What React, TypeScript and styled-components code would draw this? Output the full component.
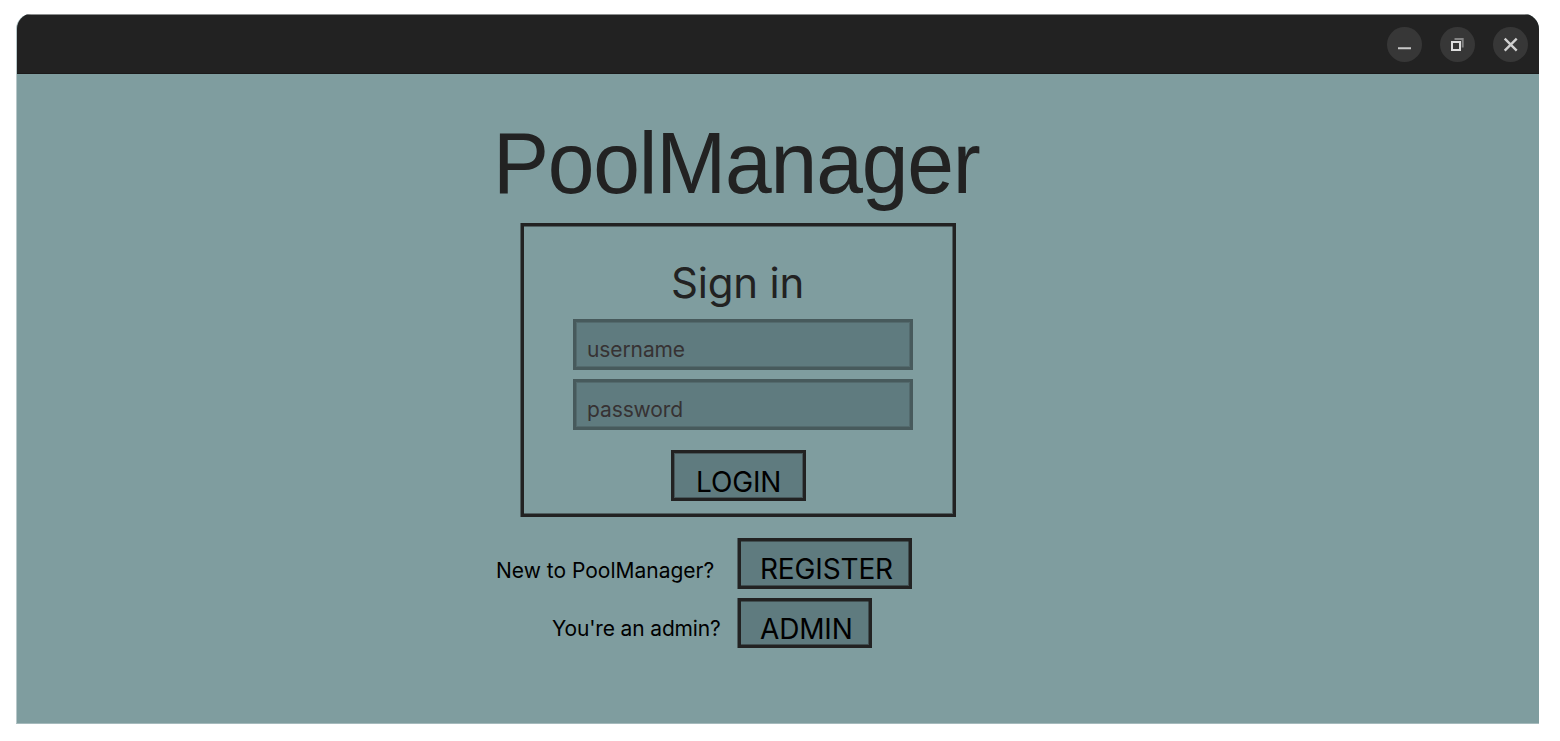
import React from "react";
import styled, { createGlobalStyle } from "styled-components";

const Global = createGlobalStyle`
  * { box-sizing: border-box; }
  body { margin: 0; background: #fff; font-family: Inter, "Liberation Sans", sans-serif; }
`;
const Page = styled.div`
  width: 1560px;
  height: 741px;
  padding: 14px 21px 18px 16px;
`;
const Window = styled.div`
  width: 1523px;
  height: 710px;
  display: flex;
  flex-direction: column;
  background: #7f9d9f;
  border-left: 1px solid #b8c8ca;
  border-bottom: 1px solid #a5babc;
  border-radius: 15px 15px 0 0;
  overflow: hidden;
`;
const TitleBar = styled.header`
  height: 60px;
  flex: none;
  background: #222;
  border-top: 1px solid #8c8e8e;
  border-bottom: 1px solid #1a1a1a;
  display: flex;
  justify-content: flex-end;
  align-items: center;
  gap: 18px;
  padding: 1px 11px 0 0;
`;
const WindowButton = styled.button`
  width: 35px;
  height: 35px;
  border: 0;
  border-radius: 50%;
  padding: 0;
  background: #373737;
  display: flex;
  svg { display: block; }
`;
const Content = styled.main`
  display: flex;
  flex-direction: column;
  padding: 41px 0 0 479px;
`;
const Title = styled.h1`
  margin: 0 0 0 -3px;
  height: 108px;
  font: 400 84px/98px "Liberation Sans", Arial, sans-serif;
  letter-spacing: -1.2px;
  transform: scaleY(1.035);
  transform-origin: 0 78px;
  color: #222;
  white-space: nowrap;
`;
const Card = styled.form`
  margin-left: 25px;
  width: 435px;
  height: 294px;
  border: 3px solid #222;
  box-shadow: -1px 0 rgba(34, 34, 34, 0.5), inset 0 1px rgba(34, 34, 34, 0.5),
    inset -1px -1px rgba(34, 34, 34, 0.5);
  display: flex;
  flex-direction: column;
  padding: 31px 0 0 49px;
`;
const Heading = styled.h2`
  margin: 0 0 10px 98px;
  font-size: 42px;
  line-height: 52px;
  letter-spacing: -0.2px;
  font-weight: 400;
  color: #222;
`;
const Field = styled.label`
  width: 340px;
  height: 51px;
  margin-bottom: 9px;
  border: 3px solid #475a5c;
  box-shadow: inset 0 0 0 1px rgba(71, 90, 92, 0.5);
  background: #5f7b7f;
  color: #363233;
  font-size: 21px;
  line-height: 26px;
  letter-spacing: -0.1px;
  padding: 15px 0 0 11px;
`;
const Button = styled.button<{ $w: number; $h?: number; $pad?: string }>`
  width: ${(p) => p.$w}px;
  height: ${(p) => p.$h ?? 51}px;
  border: 3px solid #222;
  box-shadow: inset 0 0 0 1px rgba(34, 34, 34, 0.4);
  background: #5f7b7f;
  color: #000;
  font: 400 28px/36px Inter, sans-serif;
  letter-spacing: -0.15px;
  padding: ${(p) => p.$pad ?? "10px 0 0 19px"};
  display: flex;
  align-items: flex-start;
  white-space: nowrap;
`;
const LinkButton = styled(Button)`
  box-shadow: -1px 0 rgba(34, 34, 34, 0.5), inset 0 1px rgba(34, 34, 34, 0.5),
    inset -1px -1px rgba(34, 34, 34, 0.5);
`;
const LoginRow = styled.div`
  padding: 11px 0 0 98px;
`;
const Links = styled.div`
  display: flex;
  flex-direction: column;
  gap: 9px;
  padding-top: 21px;
`;
const LinkRow = styled.div<{ $indent: number }>`
  display: flex;
  height: 51px;
  padding-left: ${(p) => p.$indent}px;
`;
const Prompt = styled.span<{ $w: number; $top: number; $tracking?: number }>`
  width: ${(p) => p.$w}px;
  padding-top: ${(p) => p.$top}px;
  letter-spacing: ${(p) => p.$tracking ?? 0}px;
  font-size: 21px;
  line-height: 26px;
  color: #000;
  white-space: nowrap;
`;

export default function App() {
  return (
    <Page>
      <Global />
      <Window>
        <TitleBar>
          <WindowButton aria-label="Minimize">
            <svg width="35" height="35"><path d="M11 21.3h13" stroke="#c8c8c8" strokeWidth="2" /></svg>
          </WindowButton>
          <WindowButton aria-label="Restore">
            <svg width="35" height="35" fill="none"><path d="M14.5 12h8.2v8.5" stroke="#858585" strokeWidth="2" /><rect x="12" y="15" width="8" height="8" stroke="#dedede" strokeWidth="2" /></svg>
          </WindowButton>
          <WindowButton aria-label="Close">
            <svg width="35" height="35"><path d="M11.7 11.7l12 12M23.7 11.7l-12 12" stroke="#cfcfcf" strokeWidth="2.4" /></svg>
          </WindowButton>
        </TitleBar>
        <Content>
          <Title>PoolManager</Title>
          <Card>
            <Heading>Sign in</Heading>
            <Field>username</Field>
            <Field>password</Field>
            <LoginRow><Button type="button" $w={135} $pad="11px 0 0 22px">LOGIN</Button></LoginRow>
          </Card>
          <Links>
            <LinkRow $indent={0}><Prompt $w={242} $top={20}>New to PoolManager?</Prompt><LinkButton $w={174}>REGISTER</LinkButton></LinkRow>
            <LinkRow $indent={56}><Prompt $w={186} $top={18} $tracking={-0.15}>You're an admin?</Prompt><LinkButton $w={134} $h={50}>ADMIN</LinkButton></LinkRow>
          </Links>
        </Content>
      </Window>
    </Page>
  );
}
